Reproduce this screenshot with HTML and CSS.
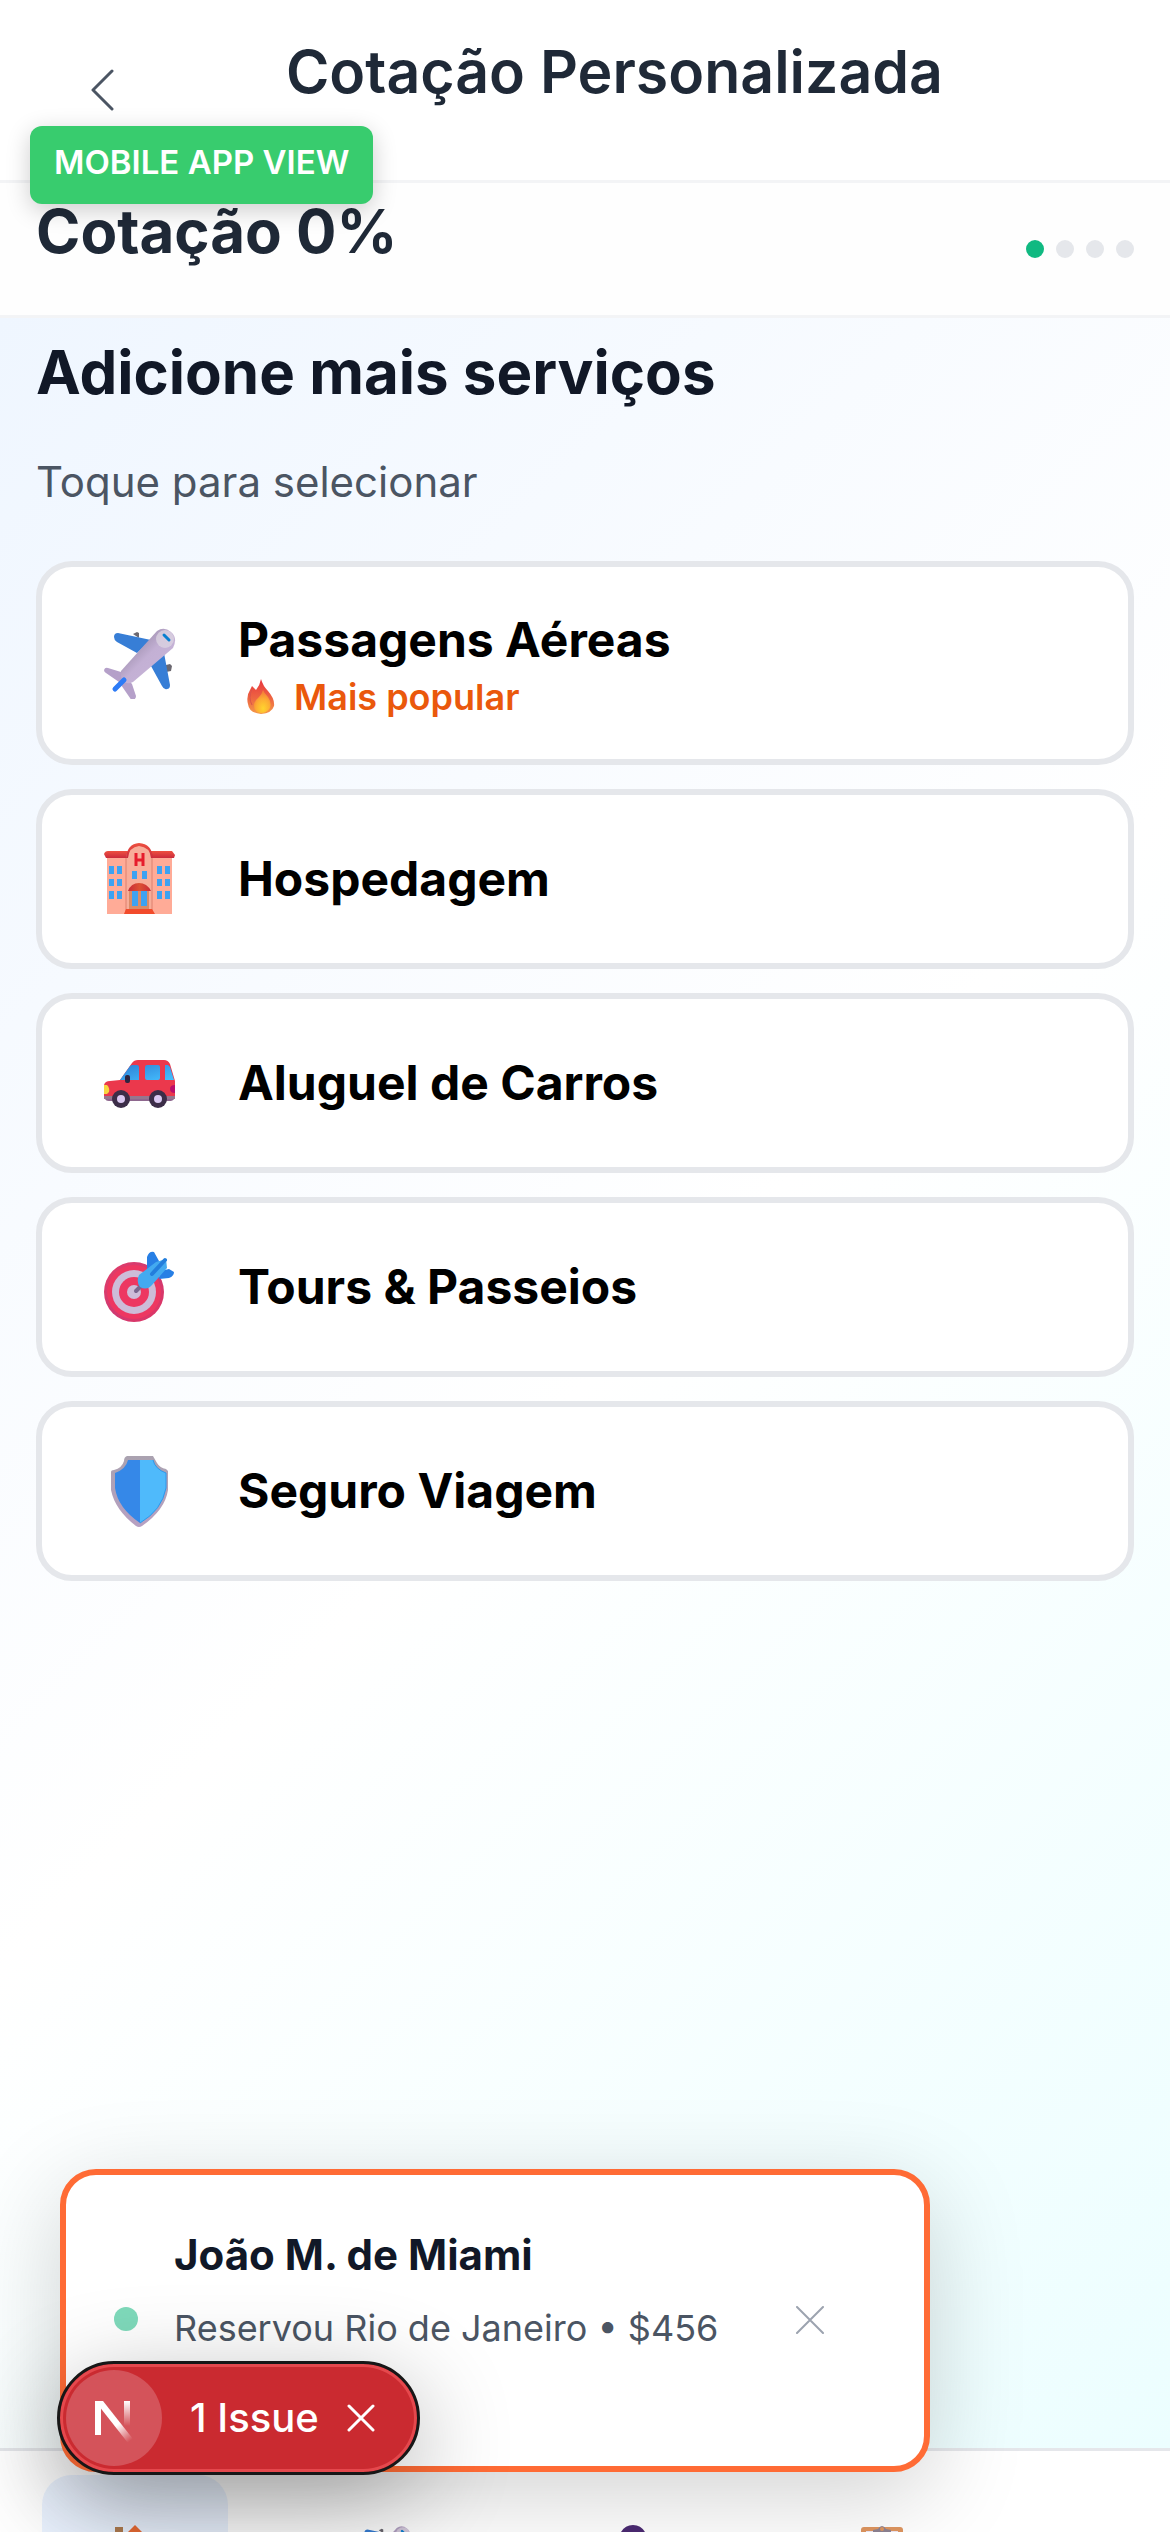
FILE: index.html
```html
<!DOCTYPE html>
<html lang="pt-BR">
<head>
<meta charset="utf-8">
<meta name="viewport" content="width=device-width, initial-scale=1">
<title>Cotação Personalizada</title>
<link rel="stylesheet" href="styles.css">
</head>
<body>
<svg class="defs" aria-hidden="true">
  <defs>
    <linearGradient id="body-metal" x1="0" y1="0" x2="1" y2="1"><stop offset=".3" stop-color="#a696b6"/><stop offset=".5" stop-color="#c3b0d4"/><stop offset="1" stop-color="#c9b6da"/></linearGradient>
    <linearGradient id="roof" x1="0" y1="0" x2="0" y2="1"><stop offset="0" stop-color="#ee5140"/><stop offset="1" stop-color="#cb2a3c"/></linearGradient>
    <linearGradient id="glass" x1="0" y1="0" x2="1" y2="1"><stop offset="0" stop-color="#2e7fd6"/><stop offset="1" stop-color="#45c1ff"/></linearGradient>
    <linearGradient id="awning" x1="0" y1="0" x2="1" y2="0"><stop offset="0" stop-color="#c92a38"/><stop offset=".5" stop-color="#dc5133"/><stop offset="1" stop-color="#c92a38"/></linearGradient>
    <linearGradient id="ring" x1="0" y1="0" x2="1" y2="1"><stop offset="0" stop-color="#e33d68"/><stop offset=".5" stop-color="#cf3a72"/><stop offset="1" stop-color="#e13462"/></linearGradient>
    <linearGradient id="rim" x1="0" y1="0" x2="0" y2="1"><stop offset="0" stop-color="#aaa2b0"/><stop offset="1" stop-color="#b7a0c2"/></linearGradient>
    <linearGradient id="flame-outer" x1="0" y1="0" x2="0" y2="1"><stop offset="0" stop-color="#e8353f"/><stop offset=".6" stop-color="#ee6a42"/><stop offset="1" stop-color="#f49a4a"/></linearGradient>
    <radialGradient id="flame-inner" cx=".55" cy=".8" r=".7"><stop offset="0" stop-color="#ffd42e"/><stop offset=".6" stop-color="#fdab33"/><stop offset="1" stop-color="#f58038"/></radialGradient>
    <linearGradient id="n-diag" gradientUnits="userSpaceOnUse" x1="14" y1="13" x2="46" y2="53"><stop offset=".6" stop-color="#fff"/><stop offset="1" stop-color="#fff" stop-opacity="0"/></linearGradient>
    <linearGradient id="n-stem" x1="0" y1="0" x2="0" y2="1"><stop offset="0" stop-color="#fff"/><stop offset="1" stop-color="#fff" stop-opacity="0"/></linearGradient>
    <symbol id="plane" viewBox="24 24 72 72">
      <path d="m53 31 4-2 2 1v5zM86 62l4-1 2 2-1 5-5 1z" fill="#6b6870"/>
      <path d="M34 34q0-4 4-4l33 7-14 13-20-11q-3-2-3-5zM84 50l6 32q0 4-3 4-3 1-5-3L71 63z" fill="#377ed6"/>
      <path d="M24 67q1-3 4-2l13 4 11 12 4 12q0 3-3 4-2 0-3-2l-11-16-13-9q-2-1-2-3z" fill="#b5a0c9"/>
      <path d="M77 28q7-5 14 1 7 6 2 16L53 79q-6 3-10-1-3-4-2-10z" fill="url(#body-metal)"/>
      <circle cx="85" cy="36" r="9" fill="#ded7e2" opacity=".7"/>
      <path d="m84 32 5 5" stroke="#087fd0" stroke-width="3" stroke-linecap="round"/>
      <path d="m35 86 9-9" stroke="#2d7bf6" stroke-width="5" stroke-linecap="round"/>
    </symbol>
  </defs>
</svg>

<div class="app">
  <header class="topbar">
    <button class="icon-button back" type="button" aria-label="Voltar">
      <svg width="24" height="42" viewBox="0 0 24 42" fill="none" stroke="#4b5563" stroke-width="3" stroke-linecap="round" stroke-linejoin="round"><path d="M22 2 3 21l19 19"/></svg>
    </button>
    <h1 class="heading topbar-title">Cotação Personalizada</h1>
    <span class="view-badge">MOBILE APP VIEW</span>
  </header>

  <section class="progress" aria-label="Progresso">
    <h2 class="heading heading-bold">Cotação 0%</h2>
    <div class="dots"><i class="dot dot-on"></i><i class="dot"></i><i class="dot"></i><i class="dot"></i></div>
  </section>

  <main class="content">
    <h2 class="heading heading-bold heading-dark">Adicione mais serviços</h2>
    <p class="hint">Toque para selecionar</p>
    <div class="services">
      <button class="service service-tall" type="button">
        <svg class="emoji" aria-hidden="true"><use href="#plane"/></svg>
        <span class="service-text">
          <span class="service-name">Passagens Aéreas</span>
          <span class="popular">
            <svg class="flame" viewBox="0 0 42 42" aria-hidden="true"><path d="M20 3q2 7 7 12 7 8 6 15-2 7-13 8Q8 37 7 28 5 20 9 14l2-4 4 4q4-5 5-11z" fill="url(#flame-outer)"/><path d="M22 14q1 3 5 7 4 6 2 11-3 5-9 5-8-1-7-9 1-4 5-7 3-3 4-7z" fill="url(#flame-inner)"/><path d="M11 13q-4 9 0 16" stroke="#d9544a" fill="none"/></svg>
            Mais popular
          </span>
        </span>
      </button>
      <button class="service" type="button">
        <svg class="emoji" viewBox="24 22 72 72" aria-hidden="true">
          <path d="M27 35h65v58H27z" fill="#ffab97"/>
          <path d="M24 33q1-3 4-3h64l3 4-1 3H26z" fill="url(#roof)"/>
          <path d="M46 93V36q2-12 13-13 12 1 13 13v57z" fill="#f8ad99"/>
          <path d="M46 37q1-14 13-15 13 1 14 15h-2q-1-11-12-12-10 1-11 12z" fill="url(#roof)"/>
          <path d="M46 37v53M72 37v53" stroke="#dd806f"/>
          <path d="M56 32v13M63 32v13M56 39h7" stroke="#e61c2c" stroke-width="3"/>
          <path d="M29 45h5v8h-5zm8 0h5v8h-5zm-8 13h5v7h-5zm8 0h5v7h-5zm-8 12h5v8h-5zm8 0h5v8h-5zM77 45h5v8h-5zm8 0h5v8h-5zm-8 13h5v7h-5zm8 0h5v7h-5zm-8 12h5v8h-5zm8 0h5v8h-5zM52 50h5v8h-5zm10 0h5v8h-5z" fill="#3da2f2"/>
          <path d="M49 70h20v19H49z" fill="#d98c68"/>
          <path d="M52 70h6v15h-6zm9 0h6v15h-6z" fill="#3da2f2"/>
          <path d="M48 70q3-8 11-8t12 8z" fill="url(#awning)"/>
          <path d="M46 88h26l3 5H44z" fill="#f24b2b"/>
        </svg>
        <span class="service-name">Hospedagem</span>
      </button>
      <button class="service" type="button">
        <svg class="emoji" viewBox="24 22 72 72" aria-hidden="true">
          <path d="M25 71h69v3q-1 2-5 2H29q-4 0-4-3z" fill="#8e678e"/>
          <path d="M24 60q1-4 6-4l10-1 12-17q2-3 6-3h26q4 0 6 4l5 17v15H24z" fill="#eb384c"/>
          <path d="m40 55 10-14q1-1 3-1h4q2 0 2 2v13zM65 42q0-2 2-2h11q2 0 2 2v11q0 2-2 2H67q-2 0-2-2zM85 40h3l2 2 4 13h-9z" fill="url(#glass)"/>
          <path d="M24 60h3q3 3 2 7l-2 2h-3z" fill="#f8d640"/>
          <path d="M95 60q-5 0-5 4t5 4z" fill="#bb0e6b"/>
          <path d="M24 71h71v3H24z" fill="#96768e"/>
          <rect x="45" y="50" width="5" height="8" rx="2" fill="#2e2440"/>
          <circle cx="41" cy="74" r="9" fill="#3c2d48"/><circle cx="78" cy="74" r="9" fill="#3c2d48"/>
          <circle cx="41" cy="74" r="4" fill="#dac8f1"/><circle cx="78" cy="74" r="4" fill="#dac8f1"/>
        </svg>
        <span class="service-name">Aluguel de Carros</span>
      </button>
      <button class="service" type="button">
        <svg class="emoji" viewBox="24 20 72 72" aria-hidden="true">
          <circle cx="54" cy="61" r="30" fill="url(#ring)"/>
          <circle cx="54" cy="61" r="27" fill="#ed3761"/>
          <circle cx="54" cy="61" r="22" fill="#cdbcd8"/>
          <circle cx="54" cy="61" r="15" fill="#ed3761"/>
          <circle cx="54" cy="61" r="7" fill="#cdbcd8"/>
          <path d="m56 60 7-7" stroke="#79668e" stroke-width="4" stroke-linecap="round"/>
          <path d="M67 39V26q2-6 7-5l5 9-2 10zM80 40l9-2 5 3q0 4-5 6l-10 1z" fill="#277fe5"/>
          <path d="m59 44 17-13 10-3 1 9-15 17q-5 6-12 2-4-5-1-12z" fill="#43aaf0"/>
          <path d="m72 43 13-14" stroke="#237edc" stroke-width="4" stroke-linecap="round"/>
        </svg>
        <span class="service-name">Tours &amp; Passeios</span>
      </button>
      <button class="service" type="button">
        <svg class="emoji" viewBox="22 23 72 72" aria-hidden="true">
          <path d="M45 24h26l4 7q3 5 9 6l2 2v19q-3 20-26 36-3 2-6 0Q33 78 29 58V40q0-2 3-2 8-2 10-9 0-4 3-5z" fill="url(#rim)"/>
          <path d="M58 28H46q-2 9-13 13v15q3 20 25 35z" fill="#3588e8"/>
          <path d="M58 28h13q2 9 13 13v15q-4 22-26 35z" fill="#4fbafb"/>
          <path d="M71 28q2 9 13 13v15q-4 22-26 35" fill="none" stroke="#2c98ed"/>
        </svg>
        <span class="service-name">Seguro Viagem</span>
      </button>
    </div>
  </main>

  <nav class="tabs" aria-label="Principal">
    <a class="tab tab-active" href="#inicio" aria-label="Início"><svg class="tab-icon" viewBox="0 0 54 54"><path d="M7 2h8v15H7z" fill="#b07c50"/><path d="m27 0 25 25-3 4H5l-3-4z" fill="#ea6c35"/><path d="M8 25h38v27H8z" fill="#f5d2ad"/></svg></a>
    <a class="tab" href="#voos" aria-label="Voos"><svg class="tab-icon"><use href="#plane"/></svg></a>
    <a class="tab" href="#atendimento" aria-label="Atendimento"><svg class="tab-icon" viewBox="0 0 54 54"><path d="M11 22Q13 0 27 0t16 22v19H11z" fill="#4b2a72"/><circle cx="27" cy="24" r="12" fill="#d99a69"/></svg></a>
    <a class="tab" href="#reservas" aria-label="Reservas"><svg class="tab-icon" viewBox="0 0 54 54"><rect x="6" y="2" width="42" height="50" rx="3" fill="#df9660"/><path d="M11 6h32v42H11z" fill="#eee7f2"/><path d="M18 9V5l5-1q4-6 8 0l5 1v4z" fill="#8e8392"/><circle cx="27" cy="4" r="2" fill="#df9660"/></svg></a>
  </nav>

  <aside class="toast">
    <i class="toast-dot"></i>
    <div class="toast-text">
      <strong class="toast-title">João M. de Miami</strong>
      <span class="toast-detail">Reservou Rio de Janeiro • $456</span>
    </div>
    <button class="icon-button toast-close" type="button" aria-label="Fechar">
      <svg width="28" height="28" viewBox="0 0 28 28" fill="none" stroke="#9ca3af" stroke-width="2" stroke-linecap="round"><path d="m1 1 26 26M27 1 1 27"/></svg>
    </button>
  </aside>

  <div class="issues">
    <button class="issues-logo" type="button" aria-label="Next.js">
      <svg width="60" height="60" viewBox="0 0 60 60" fill="none"><path d="M14 47V13" stroke="#fff" stroke-width="6"/><path d="M11 13h8l30 38-5 4z" fill="url(#n-diag)"/><path d="M40 13h6v25h-6z" fill="url(#n-stem)"/></svg>
    </button>
    <button class="issues-label" type="button">1 Issue</button>
    <button class="icon-button" type="button" aria-label="Dispensar">
      <svg width="28" height="28" viewBox="0 0 28 28" fill="none" stroke="#fff" stroke-width="3" stroke-linecap="round"><path d="m2 2 24 24M26 2 2 26"/></svg>
    </button>
  </div>
</div>
</body>
</html>
```
FILE: styles.css
```css
* { box-sizing: border-box; }

body {
  margin: 0;
  font-family: Inter, "Liberation Sans", sans-serif;
  color: #000;
}

h1, h2, p { margin: 0; }

button {
  padding: 0;
  border: 0;
  background: none;
  font: inherit;
  color: inherit;
}

.defs { position: absolute; width: 0; height: 0; }

.app {
  position: relative;
  display: flex;
  flex-direction: column;
  height: 100vh;
  overflow: hidden;
  background: #fff;
}

.icon-button { display: flex; align-items: center; justify-content: center; }

.heading {
  font-size: 60px;
  line-height: 84px;
  font-weight: 600;
  color: #1f2937;
}
.heading-bold { font-weight: 700; }
.heading-dark { color: #111827; }

.topbar {
  position: relative;
  display: flex;
  align-items: flex-start;
  justify-content: space-between;
  padding: 30px 36px;
  background: #fff;
  border-bottom: 3px solid #f3f4f6;
}
.back { width: 132px; height: 120px; }
.topbar-title { margin-right: 191px; font-size: 59px; }

.view-badge {
  position: absolute;
  z-index: 2;
  top: 126px;
  left: 30px;
  padding: 12px 24px 18px;
  border-radius: 12px;
  background: #38cc6e;
  box-shadow: 0 6px 24px rgba(0, 0, 0, .2);
  color: #fff;
  font-size: 33px;
  line-height: 48px;
  font-weight: 600;
}

.progress {
  display: flex;
  align-items: center;
  justify-content: space-between;
  padding: 6px 36px 42px;
  background: #fefefe;
  border-bottom: 3px solid #f3f4f6;
}
.dots { display: flex; gap: 12px; margin-top: 36px; }
.dot { width: 18px; height: 18px; border-radius: 50%; background: #e5e7eb; }
.dot-on { background: #10b981; }

.content {
  flex: 1;
  padding: 12px 36px;
  background: linear-gradient(135deg, #eff6ff, #fff 50%, #ecfeff);
}
.hint {
  margin: 36px 0 48px;
  font-size: 42px;
  line-height: 63px;
  color: #4b5563;
}

.services { display: flex; flex-direction: column; gap: 24px; }
.service {
  display: flex;
  align-items: center;
  gap: 62px;
  min-height: 180px;
  padding: 0 62px;
  border: 6px solid #e5e7eb;
  border-radius: 36px;
  background: #fff;
  text-align: left;
}
.service-tall { min-height: 204px; }
.emoji { flex: none; width: 72px; height: 72px; }
.service-text { display: flex; flex-direction: column; padding-top: 8px; }
.service-name { font-size: 48px; line-height: 60px; font-weight: 700; }
.popular {
  display: flex;
  align-items: center;
  gap: 8px;
  font-size: 36px;
  line-height: 54px;
  font-weight: 600;
  color: #ea580c;
}
.flame { width: 48px; height: 42px; }

.tabs {
  display: flex;
  flex: 0 0 84px;
  gap: 63px;
  padding: 24px 42px 0;
  overflow: hidden;
  background: #fff;
  border-top: 3px solid #e5e7eb;
}
.tab {
  display: flex;
  justify-content: center;
  flex: none;
  width: 186px;
  height: 168px;
  padding-top: 50px;
  border-radius: 30px;
}
.tab-active { background: #ebf3ff; }
.tab-icon { width: 54px; height: 54px; }

.toast {
  position: absolute;
  left: 60px;
  bottom: 60px;
  display: flex;
  align-items: flex-start;
  width: 870px;
  max-width: calc(100% - 120px);
  padding: 48px 48px 80px;
  border: 6px solid #ff6b35;
  border-radius: 36px;
  background: #fff;
  box-shadow: 0 24px 96px rgba(0, 0, 0, .18);
}
.toast-dot {
  width: 24px;
  height: 24px;
  margin: 84px 36px 0 0;
  border-radius: 50%;
  background: #7fdabb;
}
.toast-text { display: flex; flex: 1; flex-direction: column; gap: 12px; }
.toast-title { font-size: 42px; line-height: 63px; font-weight: 700; color: #111827; }
.toast-detail { font-size: 36px; line-height: 60px; color: #4b5563; }
.toast-close { width: 132px; height: 132px; margin-top: 31px; }

.issues {
  position: absolute;
  left: 57px;
  bottom: 57px;
  display: flex;
  align-items: center;
  gap: 28px;
  padding: 6px 42px 6px 6px;
  border: 3px solid #171717;
  border-radius: 57px;
  background: #ca2a30;
  box-shadow: inset 0 0 0 3px #e5484d, 0 24px 96px rgba(0, 0, 0, .3);
}
.issues-logo {
  display: flex;
  align-items: center;
  justify-content: center;
  width: 96px;
  height: 96px;
  border-radius: 50%;
  background: #d4535a;
}
.issues-label { font-size: 40px; line-height: 48px; font-weight: 500; color: #fff; }
```
